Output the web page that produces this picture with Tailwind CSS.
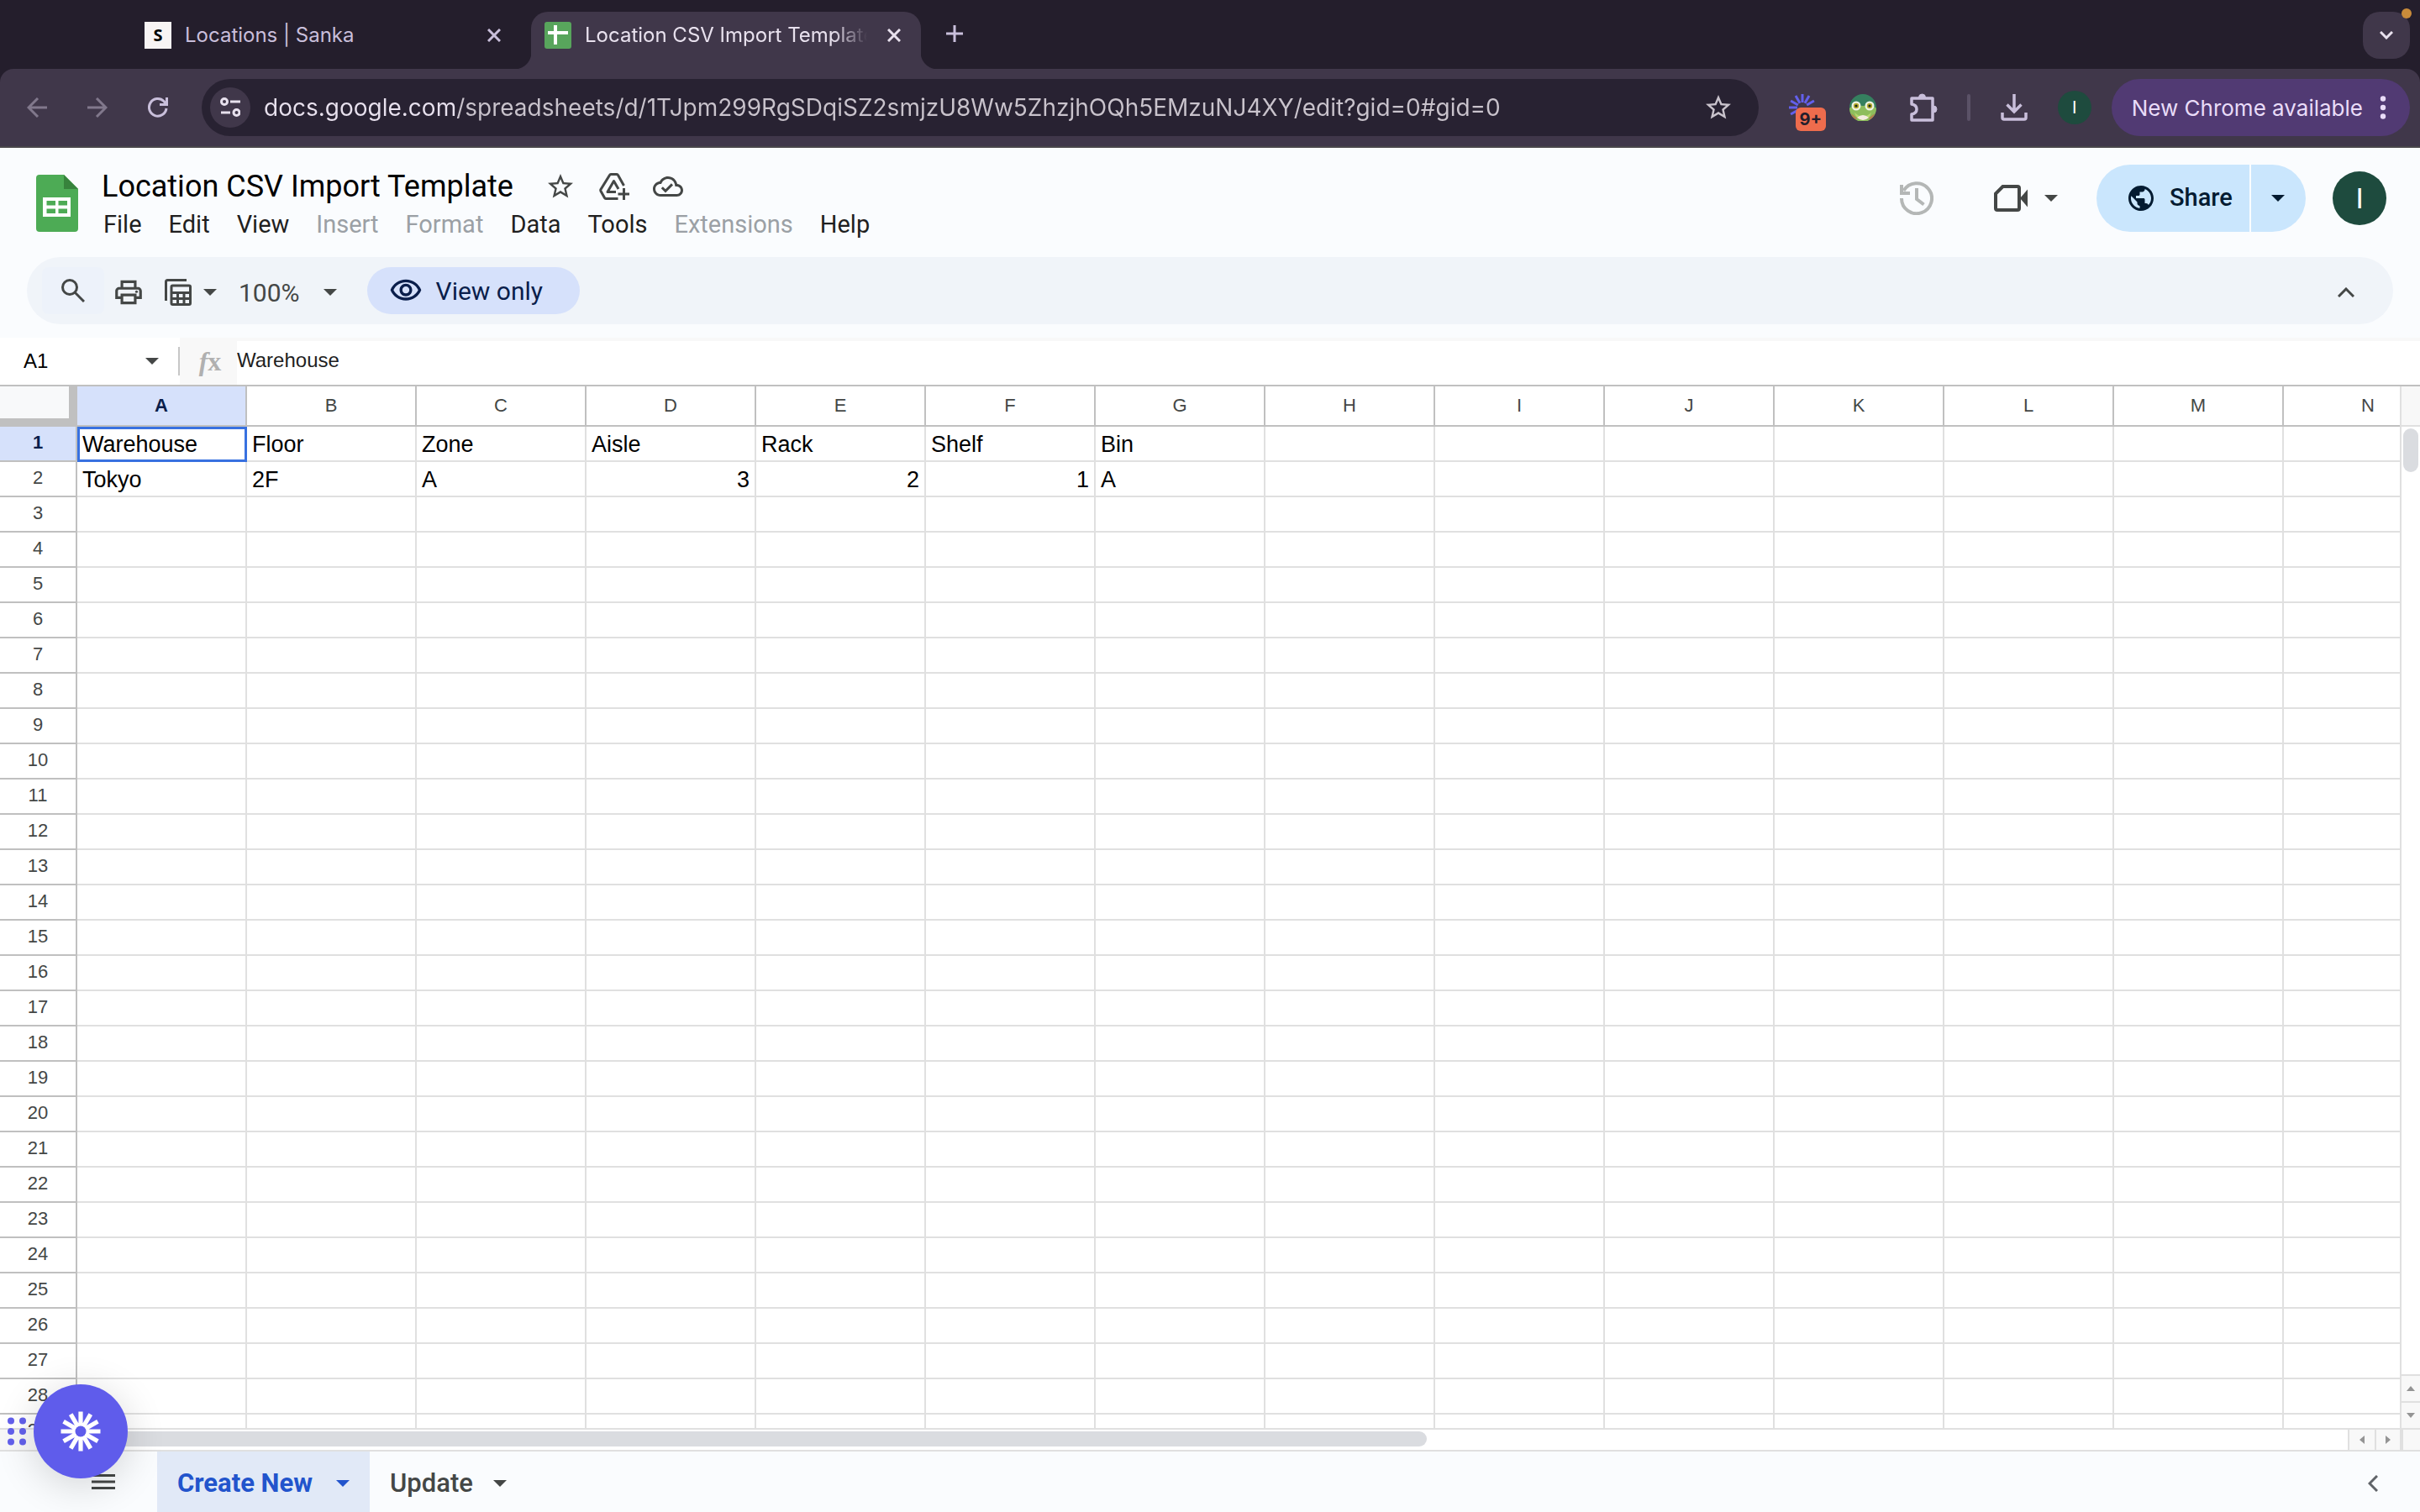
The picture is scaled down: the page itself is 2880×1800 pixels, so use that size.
<!DOCTYPE html>
<html lang="en">
<head>
    <meta charset="UTF-8">
    <title>Location CSV Import Template</title>
    <script src="https://cdn.jsdelivr.net/npm/@tailwindcss/browser@4"></script>
</head>
<body class="bg-[#241e2c]">
<div class="flex flex-col h-screen overflow-hidden font-['Roboto',sans-serif]">

    <!-- Tab strip -->
    <div class="flex items-end h-[82px] pl-[156px] pr-3 shrink-0 font-['Inter',sans-serif] text-[24px]">
        <div class="flex items-center w-[464px] h-[68px] pb-3 px-4 text-[#c9bfdb]">
            <span class="flex items-center justify-center size-8 bg-[#f8f4f4] text-black font-['Noto_Sans',sans-serif] font-bold text-[20px]">S</span>
            <span class="flex-1 ml-4">Locations | Sanka</span>
            <button aria-label="Close tab" class="flex items-center justify-center size-8">
                <svg class="size-4" viewBox="0 0 16 16" fill="none" stroke="currentColor" stroke-width="3"><path d="M1 1l14 14M15 1L1 15"/></svg>
            </button>
        </div>
        <div class="relative flex items-center w-[464px] h-[68px] pb-3 px-4 ml-3 rounded-t-[20px] bg-[#40374a] text-[#e8e1ee]">
            <span class="absolute bottom-0 -left-5 size-5 bg-[radial-gradient(circle_at_0_0,transparent_20px,#40374a_21px)]"></span>
            <span class="absolute bottom-0 -right-5 size-5 bg-[radial-gradient(circle_at_100%_0,transparent_20px,#40374a_21px)]"></span>
            <svg class="size-8 shrink-0" viewBox="0 0 32 32"><rect width="32" height="32" rx="3" fill="#58a55c"/><path d="M4 13h24M13 4v23" stroke="#fff" stroke-width="4"/></svg>
            <span class="flex-1 ml-4 mr-4 overflow-hidden whitespace-nowrap [mask-image:linear-gradient(to_right,black_88%,transparent)]">Location CSV Import Template</span>
            <button aria-label="Close tab" class="flex items-center justify-center size-8 shrink-0">
                <svg class="size-4" viewBox="0 0 16 16" fill="none" stroke="currentColor" stroke-width="3"><path d="M1 1l14 14M15 1L1 15"/></svg>
            </button>
        </div>
        <button aria-label="New tab" class="flex items-center justify-center size-8 ml-6 mb-[26px] text-[#c9bfdb]">
            <svg class="size-5" viewBox="0 0 20 20" fill="none" stroke="currentColor" stroke-width="3"><path d="M10 0v20M0 10h20"/></svg>
        </button>
        <button aria-label="Search tabs" class="relative flex items-center justify-center size-14 ml-auto mb-3 rounded-[20px] bg-[#40374a] text-[#e8e1ee]">
            <svg class="w-4 h-2.5" viewBox="0 0 16 10" fill="none" stroke="currentColor" stroke-width="3"><path d="M1 1l7 7 7-7"/></svg>
            <span class="absolute -top-1 -right-0.5 size-3 rounded-full bg-[#c98b3a]"></span>
        </button>
    </div>

    <!-- Address bar -->
    <div class="flex items-center h-[94px] pl-2 pr-3 shrink-0 rounded-t-[16px] bg-[#40374a] border-b-2 border-[#4a474b] text-[#c9bfdb] font-['Inter',sans-serif]">
        <button aria-label="Back" class="flex items-center justify-center w-18 h-12 text-[#81788c]">
            <svg class="size-6" viewBox="0 0 24 24" fill="none" stroke="currentColor" stroke-width="3"><path d="M24 12H2M13 1L2 12l11 11"/></svg>
        </button>
        <button aria-label="Forward" class="flex items-center justify-center w-18 h-12 text-[#81788c]">
            <svg class="size-6" viewBox="0 0 24 24" fill="none" stroke="currentColor" stroke-width="3"><path d="M0 12h22M11 1l11 11-11 11"/></svg>
        </button>
        <button aria-label="Reload" class="flex items-center justify-center w-18 h-12">
            <svg class="size-6" viewBox="0 0 24 24" fill="none" stroke="currentColor" stroke-width="3"><path d="M22 13A10.300 10.300 0 1 1 19 4.500L21 7"/><path d="M22.500 0v8.500H14"/></svg>
        </button>
        <div class="flex items-center flex-1 h-[68px] ml-4 pl-2.5 pr-7.5 rounded-full bg-[#282232]">
            <button aria-label="View site information" class="flex items-center justify-center size-12 rounded-full bg-[#40374a] text-[#e8e1ee]">
                <svg class="size-6" viewBox="0 0 24 24" fill="none" stroke="currentColor" stroke-width="3"><circle cx="5" cy="5" r="3.500"/><path d="M12 5h12M1 18h11"/><circle cx="19.500" cy="18" r="3.500"/></svg>
            </button>
            <input type="text" aria-label="Address" value="docs.google.com/spreadsheets/d/1TJpm299RgSDqiSZ2smjzU8Ww5ZhzjhOQh5EMzuNJ4XY/edit?gid=0#gid=0" class="flex-1 ml-4 text-[28px] text-transparent bg-clip-text bg-[linear-gradient(to_right,#e8e1ee_231px,#c9c3cc_231px)] outline-none">
            <button aria-label="Bookmark this tab" class="text-[#c9c3cc]">
                <svg class="size-9" viewBox="0 0 24 24" fill="currentColor"><path d="M22 9.240l-7.190-.62L12 2 9.190 8.630 2 9.240l5.460 4.730L5.820 21 12 17.270 18.180 21l-1.630-7.030L22 9.240zM12 15.400l-3.760 2.270 1-4.280-3.320-2.880 4.380-.38L12 6.100l1.710 4.040 4.380.38-3.320 2.880 1 4.280L12 15.400z"/></svg>
            </button>
        </div>
        <button aria-label="Sanka extension" class="relative flex items-center justify-center w-18 h-14 ml-4">
            <svg class="size-8" viewBox="-16 -16 32 32" stroke="#6360ec" stroke-width="3"><path d="M0-6V-16M3-5.200L8-13.900M5.200-3L13.900-8M-3-5.200L-8-13.900M-5.200-3L-13.900-8M-6 0H-16M-5.200 3L-13.900 8"/></svg>
            <span class="absolute top-7 left-7 flex items-center justify-center w-9 h-7 rounded-md bg-[#ee6c4d] text-[#241e2c] text-[20px] font-bold">9+</span>
        </button>
        <button aria-label="Frog extension" class="flex items-center justify-center w-18 h-14">
            <svg class="size-8" viewBox="0 0 32 32"><circle cx="16" cy="16" r="16" fill="#35805f"/><path d="M0 17q4-5 16-3 12-2 16 3a16 16 0 0 1-32 0z" fill="#8dbd5c"/><path d="M6 22q10 9 20 0-2 8-10 9-8-1-10-9z" fill="#b9d96d"/><path d="M9 28q7-6 14 0-7 6-14 0z" fill="#f3ece0"/><path d="M2 23l7 6-2 1q-4-3-5-7zM30 23l-7 6 2 1q4-3 5-7z" fill="#b8794e"/><circle cx="8" cy="14" r="5.500" fill="#eef3e4"/><circle cx="24" cy="14" r="5.500" fill="#eef3e4"/><circle cx="8" cy="14" r="3.200" fill="#b8ae32"/><circle cx="24" cy="14" r="3.200" fill="#b8ae32"/><circle cx="8" cy="14" r="1.600" fill="#1d2a1c"/><circle cx="24" cy="14" r="1.600" fill="#1d2a1c"/></svg>
        </button>
        <button aria-label="Extensions" class="flex items-center justify-center w-18 h-14">
            <svg class="size-9" viewBox="0 0 36 36" fill="none" stroke="currentColor" stroke-width="3.500"><path d="M4 7h25v26H4v-7q6-1 6-6t-6-6z" stroke-linejoin="round"/><path d="M12.500 6a4 4 0 0 1 8 0zM30 16a4 4 0 0 1 0 8z" fill="currentColor" stroke-width="1"/></svg>
        </button>
        <span class="w-1 h-8 mx-4 rounded-full bg-[#5b5267]"></span>
        <button aria-label="Downloads" class="flex items-center justify-center w-18 h-14">
            <svg class="size-8" viewBox="0 0 32 32" fill="none" stroke="currentColor" stroke-width="3.500"><path d="M16 0v20M7.500 12.500L16 21l8.500-8.500M2 22v6q0 2 2 2h24q2 0 2-2v-6"/></svg>
        </button>
        <button aria-label="Profile" class="flex items-center justify-center w-18 h-14">
            <span class="flex items-center justify-center size-10 rounded-full bg-[#1e4b3e] text-white text-[20px] font-['Roboto',sans-serif]">I</span>
        </button>
        <button class="flex items-center h-[68px] ml-2 pl-6 pr-7 gap-5 rounded-full bg-[#513a73] text-[#e9dcf8] text-[26px]">
            <span>New Chrome available</span>
            <svg class="w-2 h-7" viewBox="0 0 8 28" fill="currentColor"><circle cx="4" cy="3.500" r="3.200"/><circle cx="4" cy="14" r="3.200"/><circle cx="4" cy="24.500" r="3.200"/></svg>
        </button>
    </div>

    <!-- Document header -->
    <header class="flex items-start h-[130px] pl-[43px] pr-10 shrink-0 bg-[#fafcfe]">
        <a href="#" aria-label="Sheets home" class="mt-8">
            <svg class="w-[50px] h-[68px]" viewBox="0 0 50 68"><path d="M4 0h29l17 17v47q0 4-4 4H4q-4 0-4-4V4q0-4 4-4z" fill="#4dab55"/><path d="M33 0l17 17H33z" fill="#37833c"/><path fill="#fff" fill-rule="evenodd" d="M8 27h33v23H8zM12.500 31h10.500v5.500H12.500zM26.500 31H37v5.500H26.500zM12.500 40.500h10.500V46H12.500zM26.500 40.500H37V46H26.500z"/></svg>
        </a>
        <div class="flex flex-col ml-7 pt-6">
            <div class="flex items-center h-11 text-[#444746]">
                <h1 class="text-[36px] text-black">Location CSV Import Template</h1>
                <button aria-label="Star" class="flex items-center justify-center w-16 h-11 ml-6">
                    <svg class="size-9" viewBox="0 0 24 24" fill="currentColor"><path d="M22 9.240l-7.190-.62L12 2 9.190 8.630 2 9.240l5.460 4.730L5.820 21 12 17.270 18.180 21l-1.630-7.030L22 9.240zM12 15.400l-3.760 2.270 1-4.280-3.320-2.880 4.380-.38L12 6.100l1.710 4.040 4.380.38-3.320 2.880 1 4.280L12 15.400z"/></svg>
                </button>
                <button aria-label="Add shortcut to Drive" class="flex items-center justify-center w-16 h-11">
                    <svg class="w-9 h-8" viewBox="0 0 36 32" fill="none" stroke="currentColor" stroke-width="3"><path d="M29.500 15L22.500 2.500q-.5-1-1.500-1h-7q-1 0-1.500 1L2 19.500q-.5 1 0 2l4.500 8q.5 1 1.500 1h14.500" /><path d="M20 22.500H10L17.500 9.500L23 19" stroke-linejoin="round"/><path d="M29.500 18v14M22.500 25h14"/></svg>
                </button>
                <button aria-label="See document status" class="flex items-center justify-center w-16 h-11">
                    <svg class="size-9" viewBox="0 0 24 24" fill="currentColor"><path d="M19.350 10.040C18.670 6.590 15.640 4 12 4 9.110 4 6.600 5.640 5.350 8.040 2.340 8.360 0 10.910 0 14c0 3.310 2.690 6 6 6h13c2.760 0 5-2.240 5-5 0-2.640-2.050-4.780-4.650-4.960zM19 18H6c-2.210 0-4-1.790-4-4 0-2.050 1.530-3.760 3.560-3.970l1.070-.11.5-.95C8.080 7.140 9.940 6 12 6c2.620 0 4.880 1.860 5.390 4.430l.3 1.500 1.530.11c1.560.1 2.780 1.410 2.780 2.960 0 1.650-1.350 3-3 3zm-9-3.820l-2.090-2.090L6.500 13.500 10 17l6.010-6.010-1.410-1.410z"/></svg>
                </button>
            </div>
            <nav class="flex items-center h-12 gap-8 pl-0.5 text-[29px] text-[#1f1f1f]">
                <button>File</button>
                <button>Edit</button>
                <button>View</button>
                <button disabled class="text-[#9ba0a5]">Insert</button>
                <button disabled class="text-[#9ba0a5]">Format</button>
                <button>Data</button>
                <button>Tools</button>
                <button disabled class="text-[#9ba0a5]">Extensions</button>
                <button>Help</button>
            </nav>
        </div>
        <div class="flex items-center h-20 mt-5 ml-auto text-[#444746]">
            <button aria-label="Version history" disabled class="mr-[72px] text-[#b4b7b6]">
                <svg class="size-10" viewBox="0 0 40 40" fill="none" stroke="currentColor" stroke-width="4"><path d="M2 20A18 18 0 1 0 4.500 11"/><path d="M2 4v10h10M20 8v13l8.500 6.500"/></svg>
            </button>
            <button aria-label="Join a call" class="flex items-center gap-5 mr-[46px]">
                <svg class="w-10 h-8" viewBox="0 0 40 32"><path d="M10.500 2H28q2 0 2 2v24q0 2-2 2H4q-2 0-2-2V10.500z" fill="none" stroke="currentColor" stroke-width="4"/><path d="M31 16l9-10.500v21z" fill="currentColor"/></svg>
                <svg class="w-4 h-2" viewBox="0 0 16 8" fill="currentColor"><path d="M0 0h16L8 8z"/></svg>
            </button>
            <div class="flex items-center h-20 rounded-full overflow-hidden text-[#041b31]">
                <button class="flex items-center h-20 w-[182px] pl-[35px] gap-4 bg-[#cae6fd] text-[29px] font-medium">
                    <svg class="size-9" viewBox="0 0 24 24" fill="currentColor"><path d="M12 2C6.480 2 2 6.480 2 12s4.480 10 10 10 10-4.480 10-10S17.520 2 12 2zm-1 17.930c-3.950-.49-7-3.850-7-7.930 0-.62.08-1.210.21-1.790L9 15v1c0 1.100.9 2 2 2v1.930zm6.900-2.540c-.26-.81-1-1.390-1.900-1.390h-1v-3c0-.55-.45-1-1-1H8v-2h2c.55 0 1-.45 1-1V7h2c1.100 0 2-.9 2-2v-.41c2.930 1.190 5 4.060 5 7.410 0 2.080-.8 3.970-2.100 5.390z"/></svg>
                    <span>Share</span>
                </button>
                <button aria-label="Quick sharing actions" class="flex items-center h-20 w-[65px] pl-6 ml-0.5 bg-[#cae6fd]">
                    <svg class="w-4 h-2" viewBox="0 0 16 8" fill="currentColor"><path d="M0 0h16L8 8z"/></svg>
                </button>
            </div>
            <button aria-label="Account" class="flex items-center justify-center size-16 ml-8 rounded-full bg-[#1e4b3e] text-white text-[34px]">I</button>
        </div>
    </header>

    <!-- Toolbar -->
    <div class="shrink-0 px-8 pb-4 bg-[#fafcfe]">
        <div class="flex items-center h-20 pl-[18px] pr-[46px] rounded-full bg-[#f0f4f9] text-[#444746]">
            <button aria-label="Search the menus" class="flex items-center justify-center w-[74px] h-14 rounded-lg bg-[#edf2fa]">
                <svg class="size-7" viewBox="0 0 28 28" fill="none" stroke="currentColor" stroke-width="3"><circle cx="10" cy="10" r="8.500"/><path d="M16 16l11 11"/></svg>
            </button>
            <button aria-label="Print" class="ml-2.5 pt-1">
                <svg class="size-[38px]" viewBox="0 0 24 24" fill="currentColor"><path d="M19 8h-1V3H6v5H5c-1.660 0-3 1.340-3 3v6h4v4h12v-4h4v-6c0-1.660-1.340-3-3-3zM8 5h8v3H8V5zm8 12v2H8v-4h8v2zm2-2v-2H6v2H4v-4c0-.55.45-1 1-1h14c.55 0 1 .45 1 1v4h-2z"/><circle cx="18" cy="11.500" r="1"/></svg>
            </button>
            <button aria-label="Filter views" class="flex items-center gap-3.5 ml-6 pt-1">
                <svg class="size-8" viewBox="0 0 32 32" fill="none" stroke="currentColor" stroke-width="3"><path d="M1.500 26V3.500q0-2 2-2H26"/><rect x="8" y="8" width="22.500" height="22.500" rx="1.500"/><path d="M8 16.500h22M8 23.500h22M15.500 16v14M23 16v14"/></svg>
                <svg class="w-4 h-2" viewBox="0 0 16 8" fill="currentColor"><path d="M0 0h16L8 8z"/></svg>
            </button>
            <button aria-label="Zoom" class="flex items-center gap-7 ml-6.5 pt-1 text-[30px]">
                <span>100%</span>
                <svg class="w-4 h-2" viewBox="0 0 16 8" fill="currentColor"><path d="M0 0h16L8 8z"/></svg>
            </button>
            <button class="flex items-center h-14 w-[253px] pl-[26px] gap-4 ml-9 rounded-full bg-[#d6e1fb] text-[#0a1e4b] text-[30px]">
                <svg class="size-10" viewBox="0 0 24 24" fill="currentColor"><path d="M12 6c3.790 0 7.170 2.130 8.820 5.500C19.170 14.870 15.790 17 12 17s-7.170-2.130-8.820-5.500C4.830 8.130 8.210 6 12 6m0-2C7 4 2.730 7.110 1 11.500 2.730 15.890 7 19 12 19s9.270-3.110 11-7.500C21.270 7.110 17 4 12 4zm0 5c1.380 0 2.500 1.120 2.500 2.500S13.380 14 12 14s-2.500-1.120-2.500-2.500S10.620 9 12 9m0-2c-2.480 0-4.500 2.020-4.500 4.500S9.520 16 12 16s4.500-2.020 4.500-4.500S14.480 7 12 7z"/></svg>
                <span>View only</span>
            </button>
            <button aria-label="Hide the menus" class="ml-auto pt-1">
                <svg class="w-5 h-3" viewBox="0 0 20 12" fill="none" stroke="currentColor" stroke-width="3"><path d="M1 11l9-9 9 9"/></svg>
            </button>
        </div>
    </div>

    <!-- Formula bar -->
    <div class="flex items-center h-[58px] shrink-0 bg-white border-b-2 border-[#c0c0c0] font-['Liberation_Sans',sans-serif]">
        <input type="text" aria-label="Name box" value="A1" class="w-[144px] pl-7 text-[24px] text-black outline-none">
        <button aria-label="Named ranges" class="w-[68px] pl-[29px] text-[#444746]">
            <svg class="w-4 h-2" viewBox="0 0 16 8" fill="currentColor"><path d="M0 0h16L8 8z"/></svg>
        </button>
        <span class="w-0.5 h-[34px] bg-[#c7c7c7]"></span>
        <label for="formula" class="flex items-center justify-center w-[68px] h-full pl-1 bg-[#f8f8f8] text-[#b0b0b0] text-[32px] font-bold font-['Liberation_Serif',serif]"><i>f</i><span>x</span></label>
        <input id="formula" type="text" value="Warehouse" class="flex-1 h-full pb-1.5 border-t-4 border-[#f8f8f8] text-[24px] text-[#1f1f1f] outline-none">
    </div>

    <!-- Grid -->
    <div class="flex flex-1 min-h-0 bg-white font-['Liberation_Sans',sans-serif]">
        <div class="flex-1 min-w-0 overflow-hidden">
            <table class="table-fixed w-[2920px] border-separate border-spacing-0">
                <thead>
                    <tr id="columns" class="text-[22px] text-[#444746]">
                        <th class="w-[92px] h-12 p-0 bg-[#f8f9fa] border-r-10 border-b-10 border-[#c0c0c0]"></th>
                    </tr>
                </thead>
                <tbody id="rows"></tbody>
            </table>
        </div>
        <div class="flex flex-col w-6 shrink-0 border-l-2 border-[#e0e0e0]">
            <div class="h-12 bg-[#f8f8f8] border-b-2 border-[#e0e0e0]"></div>
            <div class="flex-1 pt-0.5 px-0.5"><div class="h-[52px] rounded-full bg-[#dadce0]"></div></div>
            <button aria-label="Scroll up" class="flex items-center justify-center h-8 border-t-2 border-[#e0e0e0] bg-[#f8f8f8] text-[#949494]">
                <svg class="w-2.5 h-1.5" viewBox="0 0 10 6" fill="currentColor"><path d="M0 6h10L5 0z"/></svg>
            </button>
            <button aria-label="Scroll down" class="flex items-center justify-center h-8 border-t-2 border-[#e0e0e0] bg-[#f8f8f8] text-[#949494]">
                <svg class="w-2.5 h-1.5" viewBox="0 0 10 6" fill="currentColor"><path d="M0 0h10L5 6z"/></svg>
            </button>
        </div>
    </div>

    <!-- Horizontal scrollbar -->
    <div class="flex h-7 shrink-0 bg-white border-y-2 border-[#e0e0e0]">
        <div class="w-[92px] bg-[#f8f8f8]"></div>
        <div class="flex-1 py-0.5"><div class="w-[1606px] h-[18px] rounded-full bg-[#dadce0]"></div></div>
        <button aria-label="Scroll left" class="flex items-center justify-center w-8 border-l-2 border-[#e0e0e0] bg-[#f8f8f8] text-[#949494]">
            <svg class="w-1.5 h-2.5" viewBox="0 0 6 10" fill="currentColor"><path d="M6 0v10L0 5z"/></svg>
        </button>
        <button aria-label="Scroll right" class="flex items-center justify-center w-[34px] border-l-2 border-r-4 border-[#e0e0e0] bg-[#f8f8f8] text-[#949494]">
            <svg class="w-1.5 h-2.5" viewBox="0 0 6 10" fill="currentColor"><path d="M0 0v10l6-5z"/></svg>
        </button>
        <div class="w-5 bg-[#f8f8f8]"></div>
    </div>

    <!-- Sheet tabs -->
    <footer class="flex items-center h-18 pl-[109px] pr-[50px] shrink-0 bg-[#fafcfe] text-[#444746] text-[31px] font-medium">
        <button aria-label="All sheets">
            <svg class="w-7 h-[18px]" viewBox="0 0 28 18" stroke="currentColor" stroke-width="3"><path d="M0 1.500h28M0 9h28M0 16.500h28"/></svg>
        </button>
        <button class="flex items-center justify-between w-[253px] h-full pt-1 px-6 ml-[50px] bg-[#e1e9f7] text-[#2254cc] font-bold">
            <span>Create New</span>
            <svg class="w-4 h-2" viewBox="0 0 16 8" fill="currentColor"><path d="M0 0h16L8 8z"/></svg>
        </button>
        <button class="flex items-center gap-6 h-full pt-1 pl-6">
            <span>Update</span>
            <svg class="w-4 h-2" viewBox="0 0 16 8" fill="currentColor"><path d="M0 0h16L8 8z"/></svg>
        </button>
        <button aria-label="Show side panel" class="ml-auto pt-1 text-[#5f6368]">
            <svg class="w-3 h-5" viewBox="0 0 12 20" fill="none" stroke="currentColor" stroke-width="3"><path d="M11 1l-9 9 9 9"/></svg>
        </button>
    </footer>
</div>

<!-- Floating assistant button -->
<svg class="fixed left-[9px] bottom-[79px] w-[22px] h-[34px] text-[#6360ec]" viewBox="0 0 22 34" fill="currentColor"><circle cx="4" cy="4.500" r="4"/><circle cx="18" cy="4.500" r="4"/><circle cx="4" cy="17" r="4"/><circle cx="18" cy="17" r="4"/><circle cx="4" cy="29.500" r="4"/><circle cx="18" cy="29.500" r="4"/></svg>
<button aria-label="Open assistant" class="fixed left-10 bottom-10 flex items-center justify-center size-28 rounded-full bg-[#5f5ceb] shadow-[0_8px_48px_rgba(0,0,0,0.16)]">
    <svg class="size-12" viewBox="-24 -24 48 48" stroke="#fff" stroke-width="5.200"><path d="M0-6V-23.500M0 6V23.500M-6 0H-23.500M6 0H23.500M3-5.200L11.800-20.400M5.200-3L20.400-11.800M5.200 3L20.400 11.800M3 5.200L11.800 20.400M-3 5.200L-11.800 20.400M-5.200 3L-20.400 11.800M-5.200-3L-20.400-11.800M-3-5.200L-11.800-20.400"/><circle r="6.500" fill="#5f5ceb" stroke="none"/></svg>
</button>

<script>
    const columns = 'ABCDEFGHIJKLMN'.split('');
    const data = [
        ['Warehouse', 'Floor', 'Zone', 'Aisle', 'Rack', 'Shelf', 'Bin'],
        ['Tokyo', '2F', 'A', 3, 2, 1, 'A']
    ];

    const head = document.getElementById('columns');
    columns.forEach((name, i) => {
        const th = document.createElement('th');
        th.textContent = name;
        th.className = i === 0
            ? 'w-[202px] h-12 p-0 pb-0.5 border-r-2 border-b-2 border-[#c0c0c0] bg-[#d6e1fb] text-[#0a1e4b] font-bold'
            : 'w-[202px] h-12 p-0 pb-0.5 border-r-2 border-b-2 border-[#c0c0c0] font-normal';
        head.appendChild(th);
    });

    const body = document.getElementById('rows');
    for (let r = 0; r < 29; r++) {
        const tr = document.createElement('tr');
        const th = document.createElement('th');
        th.textContent = r + 1;
        th.className = r === 0
            ? 'h-[42px] p-0 pb-0.5 border-r-2 border-b-2 border-[#c0c0c0] bg-[#d6e1fb] text-[#0a1e4b] text-[22px] leading-6 font-bold'
            : 'h-[42px] p-0 pb-0.5 border-r-2 border-b-2 border-[#c0c0c0] text-[#444746] text-[22px] leading-6 font-normal';
        tr.appendChild(th);

        columns.forEach((name, c) => {
            const td = document.createElement('td');
            const value = data[r] ? data[r][c] ?? '' : '';
            td.textContent = value;
            td.className = 'h-[42px] pt-0.5 pb-0 px-1.5 border-r-2 border-b-2 border-[#e0e0e0] text-[27px] leading-8 text-black';
            if (typeof value === 'number') td.classList.add('text-right');
            if (r === 0 && c === 0) td.classList.add('outline-3', '-outline-offset-3', 'outline-[#3871e0]');
            tr.appendChild(td);
        });
        body.appendChild(tr);
    }
</script>
</body>
</html>
